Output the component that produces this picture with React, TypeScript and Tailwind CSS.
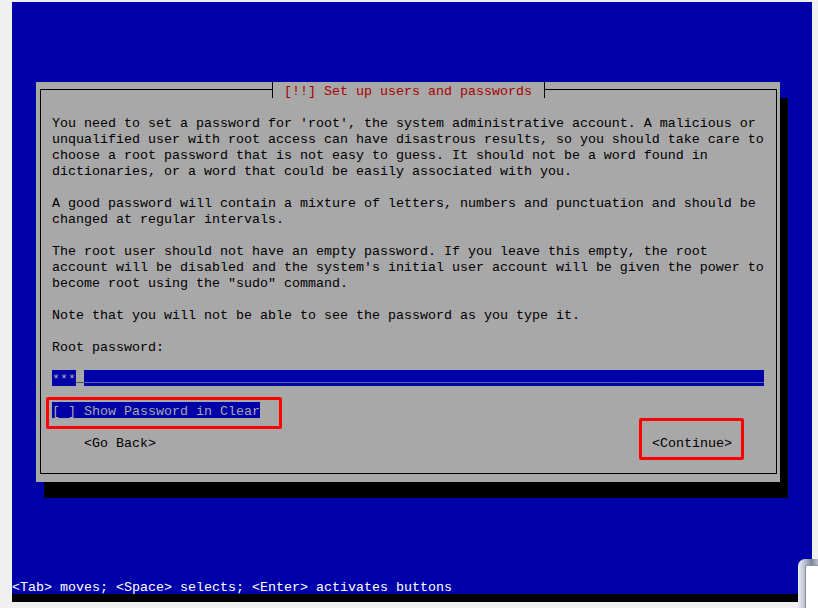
import React from 'react';

const paragraphs: string[][] = [
  [
    "You need to set a password for 'root', the system administrative account. A malicious or",
    'unqualified user with root access can have disastrous results, so you should take care to',
    'choose a root password that is not easy to guess. It should not be a word found in',
    'dictionaries, or a word that could be easily associated with you.',
  ],
  [
    'A good password will contain a mixture of letters, numbers and punctuation and should be',
    'changed at regular intervals.',
  ],
  [
    'The root user should not have an empty password. If you leave this empty, the root',
    "account will be disabled and the system's initial user account will be given the power to",
    'become root using the "sudo" command.',
  ],
  ['Note that you will not be able to see the password as you type it.'],
];

// box-drawing ┤ and ├ that join the frame line around the title
const TickLeft = () => (
  <svg width="8" height="16" viewBox="0 0 8 16" className="block">
    <path d="M0 7.5H4.5M4.5 0V16" stroke="#000" strokeWidth="1" fill="none" />
  </svg>
);

const TickRight = () => (
  <svg width="8" height="16" viewBox="0 0 8 16" className="block">
    <path d="M4.5 7.5H8M4.5 0V16" stroke="#000" strokeWidth="1" fill="none" />
  </svg>
);

export default function App() {
  return (
    <div className="relative w-[818px] h-[608px] overflow-hidden bg-[#f0f0f0] pt-[2px] pl-[12px] font-['Liberation_Mono',monospace] text-[13.33px] leading-4">
      {/* Console screen */}
      <div className="w-[800px] flex flex-col">
        <div className="h-[592px] bg-[#0000a8] flex flex-col pt-[80px]">
          {/* Dialog with its drop shadow */}
          <div className="ml-[24px] w-[744px] h-[400px] bg-[#a8a8a8] shadow-[8px_16px_0_0_#000] flex flex-col pt-[7px] pl-[4px] pr-[3px] pb-[8px]">
            <div className="flex-1 border border-black flex flex-col px-[11px] text-black">
              {/* Title on the frame */}
              <div className="-mt-[8px] ml-[216px] self-start flex h-4 bg-[#a8a8a8]">
                <TickLeft />
                <div className="w-2" />
                <span className="h-4 pt-[2px] whitespace-pre text-[#a80000]">[!!] Set up users and passwords</span>
                <div className="w-2" />
                <TickRight />
              </div>

              <div className="mt-4 flex flex-col gap-4">
                {paragraphs.map((lines, i) => (
                  <div key={i}>
                    {lines.map((line, j) => (
                      <div key={j} className="h-4 pt-[2px] whitespace-pre">{line}</div>
                    ))}
                  </div>
                ))}

                <div className="h-4 pt-[2px] whitespace-pre">Root password:</div>

                {/* Password entry */}
                <div className="flex h-4 w-[712px]">
                  <span className="h-4 pt-[2px] bg-[#0000a8] text-[#a8a8a8] whitespace-pre">***</span>
                  <span className="w-2 h-4 leading-4 bg-[#a8a8a8] text-black whitespace-pre">_</span>
                  <span className="flex-1 h-4 leading-4 bg-[#0000a8] text-[#a8a8a8] whitespace-pre">
                    {'_'.repeat(85)}
                  </span>
                </div>

                {/* Checkbox */}
                <div className="relative h-4 flex">
                  <span className="h-4 pt-[2px] bg-[#0000a8] text-[#a8a8a8] whitespace-pre">[ ] Show Password in Clear</span>
                  <div className="absolute -left-[6px] -top-[5px] w-[236px] h-[32px] border-[3px] border-[#ff0000] rounded-[2px]" />
                </div>

                {/* Buttons */}
                <div className="h-4 flex pl-[32px] pr-[33px]">
                  <span className="h-4 pt-[2px] whitespace-pre">&lt;Go Back&gt;</span>
                  <span className="relative h-4 pt-[2px] ml-auto whitespace-pre">
                    &lt;Continue&gt;
                    <span className="absolute -left-[13px] -top-[16px] w-[105px] h-[42px] border-[3px] border-[#ff0000] rounded-[2px]" />
                  </span>
                </div>
              </div>
            </div>
          </div>

          {/* Status line */}
          <div className="mt-auto h-4 pt-[2px] whitespace-pre text-white">
            &lt;Tab&gt; moves; &lt;Space&gt; selects; &lt;Enter&gt; activates buttons
          </div>
        </div>
        <div className="h-[8px] bg-black" />
      </div>

      {/* Corner of another window peeking in */}
      <div className="absolute left-[798px] top-[559px] w-[30px] h-[60px] rounded-tl-[7px] bg-[linear-gradient(to_right,#eceef5,#b7bbcc_25%,#80859c_45%,#c5c8d6_70%,#e9ebf2)] pl-[7px] pt-[6px]">
        <div className="w-full h-full bg-white rounded-tl-[2px] border-l border-t border-[#8d91a6]" />
      </div>
    </div>
  );
}
